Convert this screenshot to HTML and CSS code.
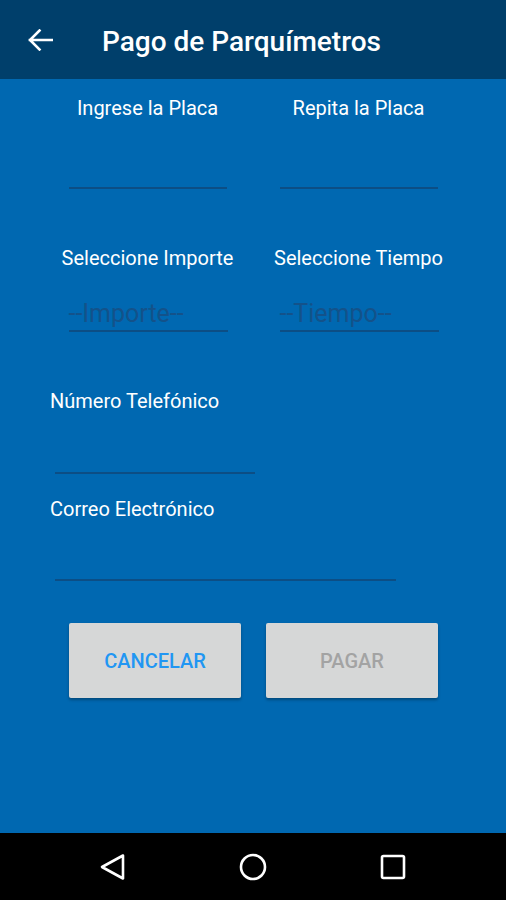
FILE: index.html
```html
<!DOCTYPE html>
<html lang="es">
<head>
    <meta charset="UTF-8">
    <meta name="viewport" content="width=device-width, initial-scale=1.0">
    <title>Pago de Parquímetros</title>
    <link rel="stylesheet" href="styles.css">
</head>
<body>
    <div id="screen">
        <div class="toolbar">
            <svg class="back" width="26" height="22" viewBox="0 0 26 22">
                <path d="M3 11 H25 M12.5 1.5 L3 11 L12.5 20.5" fill="none" stroke="#fff" stroke-width="2.6" stroke-linecap="square"/>
            </svg>
            <h1 class="title">Pago de Parquímetros</h1>
        </div>

        <div class="content">
            <div class="pair pair-plate">
                <div class="col">
                    <label class="label">Ingrese la Placa</label>
                    <div class="field field-plate"></div>
                </div>
                <div class="col">
                    <label class="label">Repita la Placa</label>
                    <div class="field field-plate"></div>
                </div>
            </div>

            <div class="pair pair-select">
                <div class="col">
                    <label class="label">Seleccione Importe</label>
                    <div class="field field-select"><span>--Importe--</span></div>
                </div>
                <div class="col">
                    <label class="label">Seleccione Tiempo</label>
                    <div class="field field-select"><span>--Tiempo--</span></div>
                </div>
            </div>

            <div class="single single-phone">
                <label class="label">Número Telefónico</label>
                <div class="field field-phone"></div>
            </div>

            <div class="single single-mail">
                <label class="label">Correo Electrónico</label>
                <div class="field field-mail"></div>
            </div>

            <div class="buttons">
                <button class="btn btn-cancel">CANCELAR</button>
                <button class="btn btn-pay">PAGAR</button>
            </div>
        </div>

        <div class="navbar">
            <svg width="28" height="28" viewBox="0 0 28 28">
                <path d="M24 2.5 L3 14 L24 25.5 Z" fill="none" stroke="#fff" stroke-width="2.6" stroke-linejoin="round"/>
            </svg>
            <svg width="28" height="28" viewBox="0 0 28 28">
                <circle cx="14" cy="14" r="12" fill="none" stroke="#fff" stroke-width="2.6"/>
            </svg>
            <svg width="28" height="28" viewBox="0 0 28 28">
                <rect x="3" y="3" width="22" height="22" rx="1.5" fill="none" stroke="#fff" stroke-width="2.6"/>
            </svg>
        </div>
    </div>
</body>
</html>
```

FILE: styles.css
```css
body {
    margin: 0;
    font-family: Roboto, "Noto Sans", sans-serif;
}
#screen {
    width: 506px;
    height: 900px;
    display: flex;
    flex-direction: column;
    background: #0068b1;
}
.toolbar {
    height: 79px;
    background: #003f6b;
    display: flex;
    align-items: center;
    padding-left: 27px;
    box-sizing: border-box;
}
.title {
    margin: 0 0 0 49px;
    color: #fff;
    font-size: 28px;
    font-weight: 500;
    line-height: 34px;
    padding-top: 5px;
}
.content {
    flex: 1;
}
.label {
    display: block;
    color: #fff;
    font-size: 20px;
    line-height: 24px;
}
.pair {
    display: grid;
    grid-template-columns: 211px 211px;
    margin-left: 42px;
}
.col {
    display: flex;
    flex-direction: column;
    align-items: center;
}
.field {
    border-bottom: 2px solid #0c4e85;
}
.pair-plate {
    padding-top: 17px;
}
.field-plate {
    width: 158px;
    height: 67px;
}
.pair-select {
    padding-top: 57px;
}
.field-select {
    width: 159px;
    height: 62px;
    margin-left: 1px;
    box-sizing: border-box;
    padding-top: 29px;
}
.field-select span {
    font-size: 25px;
    color: #13528a;
    line-height: 30px;
}
.single {
    padding-left: 50px;
}
.single-phone {
    padding-top: 57px;
}
.single-mail {
    padding-top: 23px;
}
.field-phone,
.field-mail {
    margin-left: 5px;
    height: 59px;
}
.field-phone {
    width: 200px;
}
.field-mail {
    width: 341px;
    height: 58px;
}
.buttons {
    display: flex;
    gap: 25px;
    margin: 42px 0 0 69px;
}
.btn {
    width: 172px;
    height: 75px;
    background: #d6d7d7;
    border: none;
    border-radius: 2px;
    box-shadow: 0 2px 3px rgba(0, 0, 0, 0.3);
    font-family: Roboto, "Noto Sans", sans-serif;
    font-size: 20px;
    font-weight: 500;
}
.btn-cancel {
    color: #2196f3;
}
.btn-pay {
    color: #a3a3a3;
}
.navbar {
    height: 67px;
    background: #000;
    display: flex;
    align-items: center;
    justify-content: center;
    gap: 112px;
}
```
